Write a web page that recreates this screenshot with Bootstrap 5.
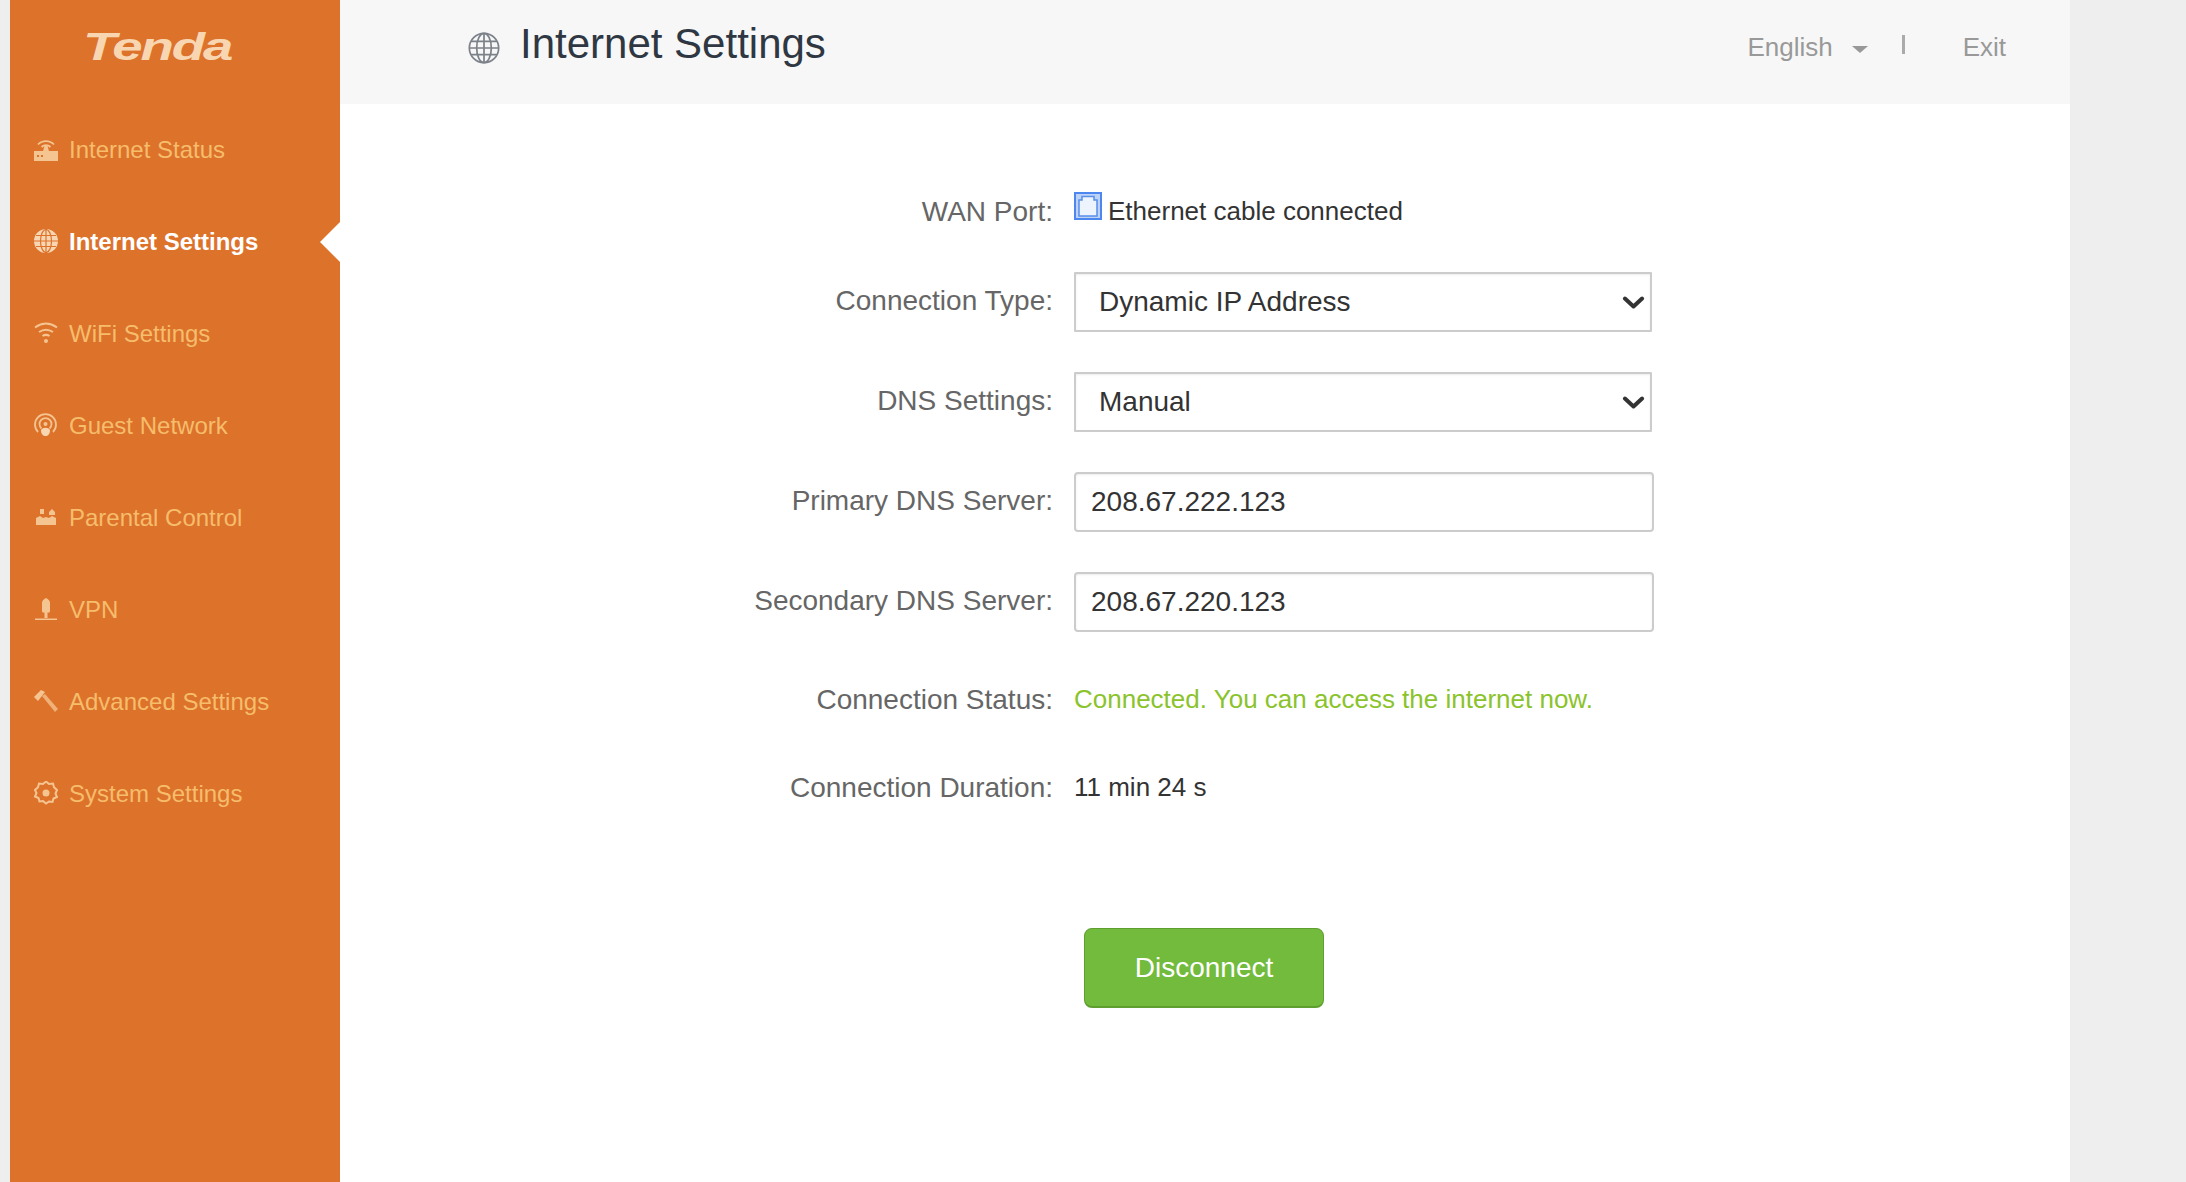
<!DOCTYPE html>
<html lang="en">
<head>
  <meta charset="UTF-8" />
  <meta name="viewport" content="width=device-width, initial-scale=1.0" />
  <title>Internet Settings - Tenda</title>
  <link href="https://cdn.jsdelivr.net/npm/bootstrap@5.3.6/dist/css/bootstrap.min.css" rel="stylesheet">
  <style>
    html, body {
      height: 100%;
    }
    body {
      font-family: "Liberation Sans", Arial, sans-serif;
      background-color: #eeeeee;
      overflow: hidden;
    }
    .shell {
      width: 2060px;
      height: 100vh;
      margin-left: 10px;
      background-color: #fff;
    }
    .side {
      width: 330px;
      flex: none;
      background-color: #dd722b;
    }
    .side-logo {
      height: 104px;
      padding: 17px 0 0 73px;
      color: #f8d6b2;
      font-size: 39px;
      line-height: 60px;
      font-weight: 700;
      font-style: italic;
      letter-spacing: -1.5px;
    }
    .side-logo span {
      display: inline-block;
      transform: scaleX(1.4);
      transform-origin: left center;
    }
    .side-link {
      position: relative;
      height: 92px;
      padding-left: 24px;
      gap: 11px;
      color: #f6bd6b;
      font-size: 24px;
      text-decoration: none;
    }
    .side-link svg {
      width: 24px;
      height: 24px;
      flex: none;
      margin-bottom: 2px;
      color: #f5c591;
    }
    .side-link.on {
      color: #fff;
      font-weight: 700;
    }
    .side-link.on::after {
      content: "";
      position: absolute;
      right: 0;
      top: 26px;
      border-style: solid;
      border-width: 20px 20px 20px 0;
      border-color: transparent #fff transparent transparent;
    }
    .top-bar {
      height: 104px;
      background-color: #f7f7f7;
      padding-left: 128px;
      padding-bottom: 8px;
    }
    .top-title {
      font-size: 42px;
      font-weight: 400;
      color: #2f3743;
      margin: 0 0 8px 20px;
    }
    .top-right {
      color: #999;
      font-size: 26px;
      padding-right: 64px;
      padding-bottom: 2px;
    }
    .lang-caret {
      width: 0;
      height: 0;
      margin: 4px 34px 0 19px;
      border-style: solid;
      border-width: 7px 8px 0;
      border-color: #999 transparent transparent;
    }
    .top-sep {
      width: 3px;
      height: 19px;
      margin: 0 58px 6px 0;
      background-color: #aaa;
    }
    .form-area {
      padding-top: 77px;
    }
    .field-row {
      height: 60px;
      margin-bottom: 40px;
    }
    .row-wan {
      margin-bottom: 31px;
    }
    .field-label {
      width: 713px;
      flex: none;
      margin-right: 21px;
      text-align: right;
      color: #666;
      font-size: 28px;
      padding-bottom: 2px;
    }
    .row-wan .field-label {
      padding: 2px 0 0;
    }
    .row-text .field-label {
      padding: 1px 0 0;
    }
    .field-value {
      font-size: 26px;
      color: #333;
    }
    .wan-icon {
      width: 28px;
      height: 28px;
      margin: 0 6px 10px 0;
    }
    .form-select.wide-select, .form-control.wide-input {
      height: 60px;
      font-size: 28px;
      color: #333;
      border: 2px solid #ccc;
      box-shadow: inset 0 1px 2px rgba(0, 0, 0, .08);
    }
    .form-select.wide-select {
      width: 578px;
      padding: 0 40px 0 23px;
      border-radius: 1px;
      background-size: 25px 25px;
      background-position: right 4px center;
      --bs-form-select-bg-img: url("data:image/svg+xml,%3csvg xmlns='http://www.w3.org/2000/svg' viewBox='0 0 16 16'%3e%3cpath fill='none' stroke='%23333' stroke-linecap='round' stroke-linejoin='round' stroke-width='2.6' d='m2.500 5.500 5.500 5 5.500-5'/%3e%3c/svg%3e");
    }
    .form-control.wide-input {
      width: 580px;
      padding: 0 15px;
      border-radius: 4px;
    }
    .state-ok {
      color: #8ac32b;
    }
    .row-status {
      margin-top: -3px;
      margin-bottom: 28px;
    }
    .btn-line {
      padding-left: 744px;
      padding-top: 71px;
    }
    .btn.btn-disconnect {
      width: 240px;
      height: 80px;
      font-size: 28px;
      color: #fff;
      background-color: #72bb3c;
      border: 1px solid #5f9f30;
      border-bottom-width: 2px;
      border-radius: 8px;
    }
  </style>
</head>
<body>
  <div class="shell d-flex">
    <aside class="side">
      <div class="side-logo"><span>Tenda</span></div>
      <nav class="nav flex-column">
        <a href="#" class="side-link d-flex align-items-center">
          <svg viewBox="0 0 24 24" fill="none" stroke="currentColor" stroke-width="1.800"><path d="M4 7.500a11 11 0 0 1 16 0M7.500 10a6.500 6.500 0 0 1 9 0"/><path d="M10.500 8.500h3l1.500 6H9z" fill="currentColor" stroke="none"/><rect x="0" y="14" width="24" height="10" fill="currentColor" stroke="none"/><path d="M3 19h2M7 19h2" stroke="#dd722b"/></svg>
          Internet Status
        </a>
        <a href="#" class="side-link on d-flex align-items-center">
          <svg viewBox="0 0 24 24" fill="#f8d6b2" stroke="#dd722b" stroke-width="1.200"><circle cx="12" cy="12" r="12" stroke="none"/><ellipse cx="12" cy="12" rx="5.500" ry="11.500" fill="none"/><path d="M12 0v24M0 12h24M2 6.500h20M2 17.500h20" fill="none"/></svg>
          Internet Settings
        </a>
        <a href="#" class="side-link d-flex align-items-center">
          <svg viewBox="0 0 24 24" fill="none" stroke="currentColor" stroke-width="2"><path d="M1 6.500c7-5 15-5 22 0M5 11c4.500-3 9.500-3 14 0M8.500 15c2-1.300 5-1.300 7 0"/><circle cx="12" cy="20" r="2" fill="currentColor" stroke="none"/></svg>
          WiFi Settings
        </a>
        <a href="#" class="side-link d-flex align-items-center">
          <svg viewBox="0 0 24 24" fill="none" stroke="currentColor" stroke-width="1.800"><path d="M4 19a10.500 10.500 0 1 1 15 0"/><path d="M7.500 15.500a6 6 0 1 1 8 0"/><circle cx="11.500" cy="11" r="2" fill="currentColor" stroke="none"/><path d="M7 17c2-3 7-3 9 0 0 4-2 6-4.500 6S7 21 7 17z" fill="#f8d6b2" stroke="none"/></svg>
          Guest Network
        </a>
        <a href="#" class="side-link d-flex align-items-center">
          <svg viewBox="0 0 24 24" fill="currentColor"><path d="M2 20v-7l4-2 3 2 3-1 3 1 3-2 4 2v7z"/><path d="M6 4h4v5H6zM15 7l3-3 3 3v3h-6z"/></svg>
          Parental Control
        </a>
        <a href="#" class="side-link d-flex align-items-center">
          <svg viewBox="0 0 24 24" fill="currentColor"><path d="M12 1c2.500 1 4 3 4 5v8c0 1-1 2-4 2s-4-1-4-2V6c0-2 1.500-4 4-5z"/><path d="M10.500 16h3v5h-3z"/><path d="M1 21.500h22v1.500H1z"/></svg>
          VPN
        </a>
        <a href="#" class="side-link d-flex align-items-center">
          <svg viewBox="0 0 24 24" fill="currentColor"><path d="M0 8l7-7 4 2-7 9z"/><path d="M8 7l3-2 13 15-3 3z" opacity=".75"/></svg>
          Advanced Settings
        </a>
        <a href="#" class="side-link d-flex align-items-center">
          <svg viewBox="0 0 24 24" fill="none" stroke="currentColor" stroke-width="2"><path d="M12 1l3 2.500 4-.500 1 3.800 3 2.700-1.500 3.500 1.500 3.500-3.500 1.500-1 3.500-3.500-.500L12 23l-3-2.500-3.500.500-1-3.500L1 16l1.500-3.500L1 9.500 4 6.800 5 3l4 .500z" transform="translate(0 -.5)"/><circle cx="12" cy="12" r="3.500" fill="currentColor" stroke="none"/></svg>
          System Settings
        </a>
      </nav>
    </aside>

    <main class="flex-grow-1">
      <header class="top-bar d-flex align-items-center">
        <svg width="32" height="32" viewBox="0 0 24 24" fill="none" stroke="#7d828a" stroke-width="1.300"><circle cx="12" cy="12" r="11"/><ellipse cx="12" cy="12" rx="5.500" ry="11"/><path d="M12 1v22M1 12h22M2.500 7h19M2.500 17h19"/></svg>
        <h1 class="top-title">Internet Settings</h1>
        <div class="top-right d-flex align-items-center ms-auto">
          <span>English</span>
          <span class="lang-caret"></span>
          <span class="top-sep"></span>
          <span>Exit</span>
        </div>
      </header>

      <form class="form-area">
        <div class="field-row row-wan d-flex align-items-center">
          <label class="field-label">WAN Port:</label>
          <div class="field-value d-flex align-items-center">
            <svg class="wan-icon" viewBox="0 0 28 28"><rect x="1" y="1" width="26" height="26" fill="#bcd2f7" stroke="#4d86ee" stroke-width="2"/><path d="M5 8h3V4.500h12V8h3v16H5z" fill="#eef4fe" stroke="#5a8ee8" stroke-width="1.500"/></svg>
            Ethernet cable connected
          </div>
        </div>
        <div class="field-row d-flex align-items-center">
          <label class="field-label" for="connType">Connection Type:</label>
          <select id="connType" class="form-select wide-select">
            <option>Dynamic IP Address</option>
          </select>
        </div>
        <div class="field-row d-flex align-items-center">
          <label class="field-label" for="dnsMode">DNS Settings:</label>
          <select id="dnsMode" class="form-select wide-select">
            <option>Manual</option>
          </select>
        </div>
        <div class="field-row d-flex align-items-center">
          <label class="field-label" for="dns1">Primary DNS Server:</label>
          <input id="dns1" type="text" class="form-control wide-input" value="208.67.222.123" />
        </div>
        <div class="field-row d-flex align-items-center">
          <label class="field-label" for="dns2">Secondary DNS Server:</label>
          <input id="dns2" type="text" class="form-control wide-input" value="208.67.220.123" />
        </div>
        <div class="field-row row-status row-text d-flex align-items-center">
          <label class="field-label">Connection Status:</label>
          <div class="field-value state-ok">Connected. You can access the internet now.</div>
        </div>
        <div class="field-row row-text d-flex align-items-center">
          <label class="field-label">Connection Duration:</label>
          <div class="field-value">11 min 24 s</div>
        </div>
        <div class="btn-line">
          <button type="button" class="btn btn-disconnect">Disconnect</button>
        </div>
      </form>
    </main>
  </div>
  <script src="https://cdn.jsdelivr.net/npm/bootstrap@5.3.6/dist/js/bootstrap.bundle.min.js"></script>
</body>
</html>
